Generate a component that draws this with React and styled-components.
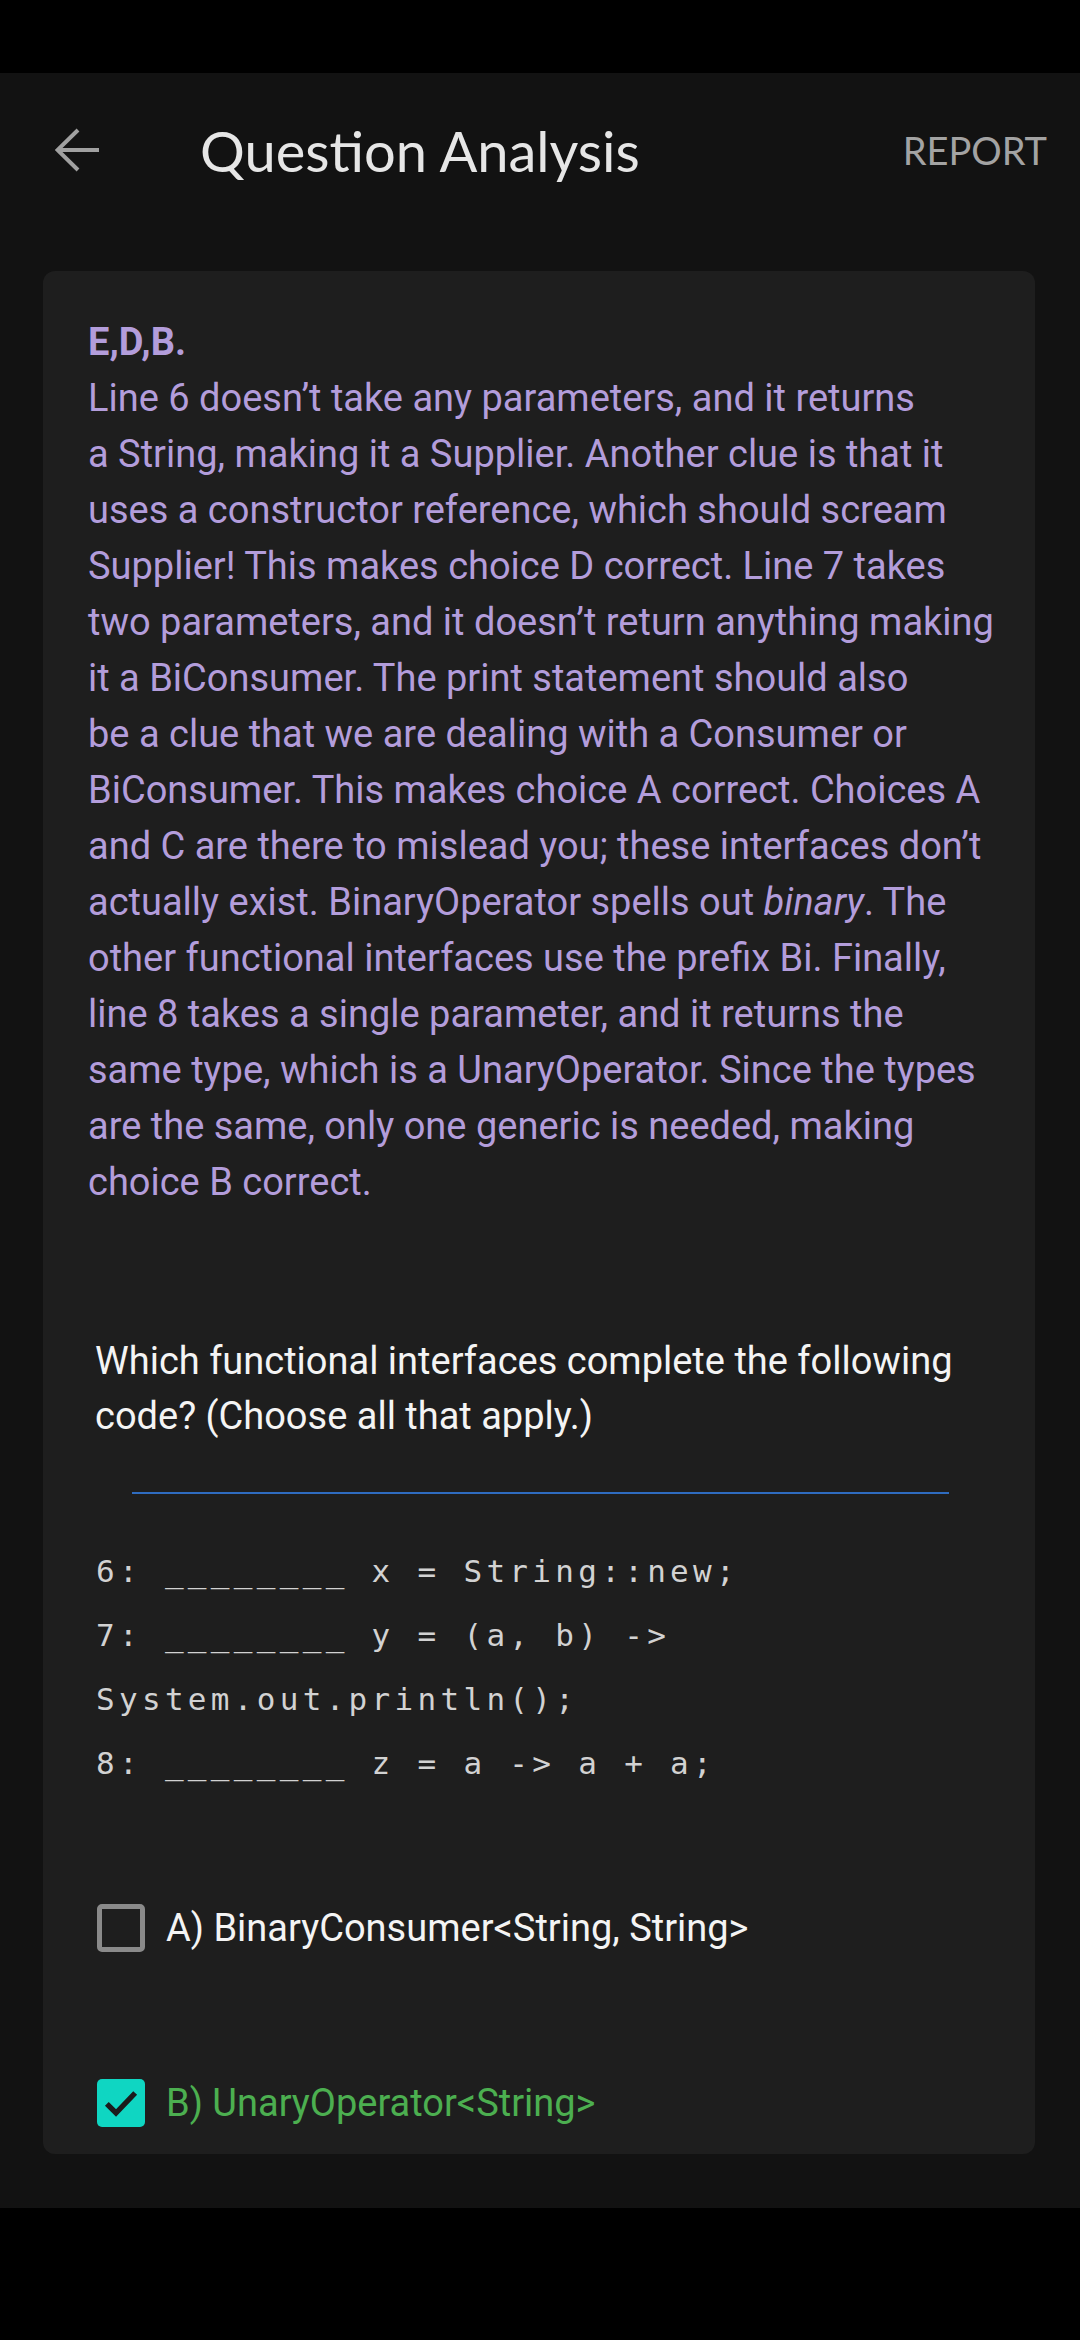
import React from 'react';
import styled, { createGlobalStyle } from 'styled-components';

const GlobalStyle = createGlobalStyle`
  html, body {
    margin: 0;
    padding: 0;
    background: #000;
  }
  * {
    box-sizing: border-box;
  }
`;

const StatusBar = styled('div')`
  height: 73px;
  background: #000;
`;

const Screen = styled('div')`
  height: 2135px;
  background: #121212;
  display: flex;
  flex-direction: column;
`;

const Header = styled('header')`
  height: 154px;
  display: flex;
  align-items: center;
  padding: 0 33px 0 55px;
`;

const BackButton = styled('button')`
  width: 44px;
  height: 44px;
  padding: 0;
  border: none;
  background: transparent;
  display: flex;
  align-items: center;
  justify-content: center;
`;

const Title = styled('h1')`
  flex: 1;
  margin: 0 0 0 101px;
  font-family: Lato, 'Open Sans', sans-serif;
  font-weight: 400;
  font-size: 56px;
  color: #e6e6e6;
`;

const Report = styled('span')`
  font-family: Lato, Roboto, sans-serif;
  font-size: 38px;
  color: #a3a3a3;
`;

const Card = styled('section')`
  margin: 44px 45px 0 43px;
  background: #1e1e1e;
  border-radius: 12px;
  padding: 43px 45px 27px 45px;
  font-family: Roboto, 'Liberation Sans', sans-serif;
`;

const Explanation = styled('p')`
  margin: 0;
  font-size: 38px;
  line-height: 56px;
  color: #b39ddb;
  white-space: nowrap;

  b {
    font-weight: 700;
  }
`;

const Question = styled('p')`
  margin: 124px 0 0 0;
  padding-left: 7px;
  font-size: 38px;
  line-height: 55px;
  color: #f4f4f4;
  white-space: nowrap;
`;

const Divider = styled('hr')`
  margin: 48px 41px 0 44px;
  border: none;
  height: 2px;
  background: #2f6cc0;
`;

const Code = styled('pre')`
  margin: 45px 0 0 0;
  padding-left: 8px;
  font-family: 'DejaVu Sans Mono', 'Liberation Mono', monospace;
  font-size: 31px;
  line-height: 64px;
  letter-spacing: 4.3px;
  color: #d2d2d2;
`;

const Options = styled('div')`
  margin-top: 109px;
  display: flex;
  flex-direction: column;
  gap: 127px;
  padding-left: 9px;
`;

const OptionRow = styled('label')`
  display: flex;
  align-items: center;
  gap: 21px;
  height: 48px;
  font-size: 38px;
  color: ${(p) => (p.$correct ? '#4caf50' : '#f4f4f4')};
`;

const Box = styled('span')`
  width: 48px;
  height: 48px;
  flex-shrink: 0;
  border-radius: 5px;
  display: flex;
  align-items: center;
  justify-content: center;
  background: ${(p) => (p.$checked ? '#0fd6c2' : 'transparent')};
  border: ${(p) => (p.$checked ? 'none' : '5px solid #8a8a8a')};
`;

const explanationLines = [
  'Line 6 doesn’t take any parameters, and it returns',
  'a String, making it a Supplier. Another clue is that it',
  'uses a constructor reference, which should scream',
  'Supplier! This makes choice D correct. Line 7 takes',
  'two parameters, and it doesn’t return anything making',
  'it a BiConsumer. The print statement should also',
  'be a clue that we are dealing with a Consumer or',
  'BiConsumer. This makes choice A correct. Choices A',
  'and C are there to mislead you; these interfaces don’t',
  null,
  'other functional interfaces use the prefix Bi. Finally,',
  'line 8 takes a single parameter, and it returns the',
  'same type, which is a UnaryOperator. Since the types',
  'are the same, only one generic is needed, making',
  'choice B correct.',
];

const codeText = `6: ________ x = String::new;
7: ________ y = (a, b) ->
System.out.println();
8: ________ z = a -> a + a;`;

function ArrowBack() {
  return (
    <svg width="44" height="44" viewBox="0 0 44 44" fill="none">
      <path d="M44 22H3M23 2L2.5 22 23 42" stroke="#a0a0a0" strokeWidth="4" />
    </svg>
  );
}

function Check() {
  return (
    <svg width="40" height="40" viewBox="0 0 24 24" fill="none">
      <path d="M3.5 12.5l5.5 5.5L20.5 6" stroke="#1b1b1b" strokeWidth="3.2" />
    </svg>
  );
}

function Option({ checked, correct, children }) {
  return (
    <OptionRow $correct={correct}>
      <Box $checked={checked}>{checked && <Check />}</Box>
      {children}
    </OptionRow>
  );
}

export default function App() {
  return (
    <>
      <GlobalStyle />
      <StatusBar />
      <Screen>
        <Header>
          <BackButton aria-label="Back">
            <ArrowBack />
          </BackButton>
          <Title>Question Analysis</Title>
          <Report>REPORT</Report>
        </Header>
        <Card>
          <Explanation>
            <b>E,D,B.</b>
            {explanationLines.map((line, i) => (
              <React.Fragment key={i}>
                <br />
                {line === null ? (
                  <>actually exist. BinaryOperator spells out <i>binary</i>. The</>
                ) : (
                  line
                )}
              </React.Fragment>
            ))}
          </Explanation>
          <Question>
            Which functional interfaces complete the following
            <br />
            code? (Choose all that apply.)
          </Question>
          <Divider />
          <Code>{codeText}</Code>
          <Options>
            <Option>A) BinaryConsumer&lt;String, String&gt;</Option>
            <Option checked correct>B) UnaryOperator&lt;String&gt;</Option>
          </Options>
        </Card>
      </Screen>
    </>
  );
}
